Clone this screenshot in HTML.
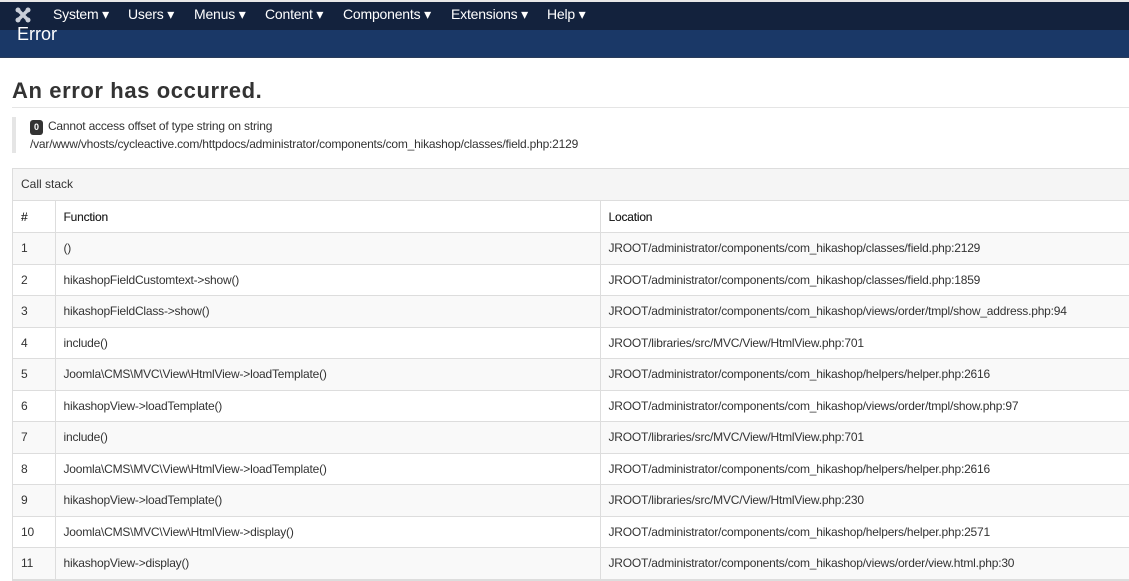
<!DOCTYPE html>
<html><head><style>
*{margin:0;padding:0;box-sizing:border-box}
body{width:1129px;height:580px;overflow:hidden;background:#fff;font-family:"Liberation Sans",Arial,sans-serif;color:#333;position:relative}
.top{position:absolute;left:0;top:0;width:1129px;height:2px;background:#e8e8e8}
.nav{position:absolute;left:0;top:2px;width:1129px;height:28px;background:#13223d}
.nav span{position:absolute;top:4px;color:#fff;font-size:14px;letter-spacing:-.2px}
.hdr{position:absolute;left:0;top:30px;width:1129px;height:28px;background:#1a3867;border-bottom:1px solid #2a3c5a}
.hdr span{position:absolute;left:17px;top:-6px;color:#fff;font-size:18px}
h1{position:absolute;left:12px;top:78px;font-size:22px;font-weight:bold;color:#333;letter-spacing:.6px}
.hr{position:absolute;left:12px;top:107px;width:1117px;height:1px;background:#e5e5e5}
.bq{position:absolute;left:12px;top:117px;height:36px;border-left:4px solid #e5e5e5;padding-left:14px;font-size:12px;line-height:18px;letter-spacing:-.2px}
.badge{display:inline-block;background:#333;color:#fff;font-size:9px;font-weight:bold;border-radius:3px;padding:0 4px;line-height:15px;margin-right:2px;vertical-align:0}
.tbl{position:absolute;left:12px;top:168px;width:1130px;border:1px solid #ddd;border-right:0}
.cap{height:32px;background:#f5f5f5;border-bottom:1px solid #ddd;font-size:12px;padding:8px 8px}
table{border-collapse:collapse;width:100%;font-size:12px;letter-spacing:-.2px}
td,th{border-bottom:1px solid #ddd;height:31.5px;padding:0 8px;text-align:left;vertical-align:middle}
th{font-weight:normal;color:#222;text-shadow:0 0 .3px #222}
td+td,th+th{border-left:1px solid #ddd}
tr:nth-child(even) td{background:#f9f9f9}
</style></head><body>
<div class="top"></div>
<div class="nav">
<svg style="position:absolute;left:15px;top:5px" width="16" height="16" viewBox="0 0 16 16"><g fill="#c9ced8"><circle cx="3" cy="3" r="2.5"/><circle cx="13" cy="3" r="2.5"/><circle cx="3" cy="13" r="2.5"/><circle cx="13" cy="13" r="2.5"/><path d="M3 3L13 13M13 3L3 13" stroke="#c9ced8" stroke-width="3.5"/></g></svg>
<span style="left:53px">System ▾</span><span style="left:128px">Users ▾</span><span style="left:194px">Menus ▾</span><span style="left:265px">Content ▾</span><span style="left:343px">Components ▾</span><span style="left:451px">Extensions ▾</span><span style="left:547px">Help ▾</span>
</div>
<div class="hdr"><span>Error</span></div>
<h1>An error has occurred.</h1>
<div class="hr"></div>
<div class="bq"><div><span class="badge">0</span> Cannot access offset of type string on string</div><div>/var/www/vhosts/cycleactive.com/httpdocs/administrator/components/com_hikashop/classes/field.php:2129</div></div>
<div class="tbl">
<div class="cap">Call stack</div>
<table>
<tr><th style="width:42px">#</th><th style="width:545px">Function</th><th>Location</th></tr>
<tr><td>1</td><td>()</td><td>JROOT/administrator/components/com_hikashop/classes/field.php:2129</td></tr>
<tr><td>2</td><td>hikashopFieldCustomtext-&gt;show()</td><td>JROOT/administrator/components/com_hikashop/classes/field.php:1859</td></tr>
<tr><td>3</td><td>hikashopFieldClass-&gt;show()</td><td>JROOT/administrator/components/com_hikashop/views/order/tmpl/show_address.php:94</td></tr>
<tr><td>4</td><td>include()</td><td>JROOT/libraries/src/MVC/View/HtmlView.php:701</td></tr>
<tr><td>5</td><td>Joomla\CMS\MVC\View\HtmlView-&gt;loadTemplate()</td><td>JROOT/administrator/components/com_hikashop/helpers/helper.php:2616</td></tr>
<tr><td>6</td><td>hikashopView-&gt;loadTemplate()</td><td>JROOT/administrator/components/com_hikashop/views/order/tmpl/show.php:97</td></tr>
<tr><td>7</td><td>include()</td><td>JROOT/libraries/src/MVC/View/HtmlView.php:701</td></tr>
<tr><td>8</td><td>Joomla\CMS\MVC\View\HtmlView-&gt;loadTemplate()</td><td>JROOT/administrator/components/com_hikashop/helpers/helper.php:2616</td></tr>
<tr><td>9</td><td>hikashopView-&gt;loadTemplate()</td><td>JROOT/libraries/src/MVC/View/HtmlView.php:230</td></tr>
<tr><td>10</td><td>Joomla\CMS\MVC\View\HtmlView-&gt;display()</td><td>JROOT/administrator/components/com_hikashop/helpers/helper.php:2571</td></tr>
<tr><td>11</td><td>hikashopView-&gt;display()</td><td>JROOT/administrator/components/com_hikashop/views/order/view.html.php:30</td></tr>
</table>
</div>
</body></html>
